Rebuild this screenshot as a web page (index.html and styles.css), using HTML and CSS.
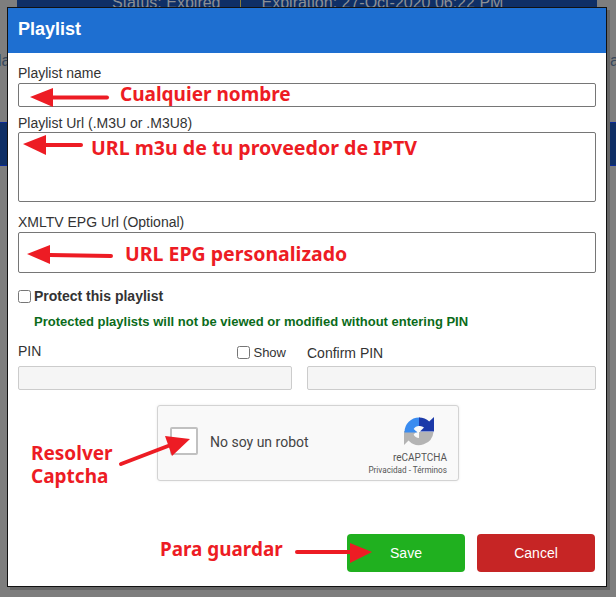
FILE: index.html
```html
<!DOCTYPE html>
<html lang="en">
<head>
    <meta charset="UTF-8">
    <meta name="viewport" content="width=device-width, initial-scale=1.0">
    <title>Playlist</title>
    <link rel="stylesheet" href="styles.css">
</head>
<body>
    <!-- Page behind the dialog -->
    <div class="backdrop">
        <div class="status-bar">
            <span class="status-item">Status: Expired</span>
            <span class="status-item status-item-last">Expiration: 27-Oct-2020 06:22 PM</span>
        </div>
        <div class="side-text">
            <span>la</span>
            <span>va</span>
        </div>
        <div class="nav-bar"></div>
    </div>

    <div class="modal">
        <div class="modal-header">Playlist</div>
        <form class="modal-body">
            <label class="field-label" for="name">Playlist name</label>
            <input class="text-input name-input" type="text" id="name">

            <label class="field-label" for="url">Playlist Url (.M3U or .M3U8)</label>
            <textarea class="text-input url-input" id="url"></textarea>

            <label class="field-label epg-label" for="epg">XMLTV EPG Url (Optional)</label>
            <textarea class="text-input epg-input" id="epg"></textarea>

            <label class="protect-row">
                <input type="checkbox" class="check">
                <span>Protect this playlist</span>
            </label>
            <p class="protect-note">Protected playlists will not be viewed or modified without entering PIN</p>

            <div class="pin-row">
                <div class="pin-col pin-col-first">
                    <div class="pin-head">
                        <label class="field-label" for="pin">PIN</label>
                        <label class="show-pin">
                            <input type="checkbox" class="check">
                            <span>Show</span>
                        </label>
                    </div>
                    <input class="pin-input" type="password" id="pin" disabled>
                </div>
                <div class="pin-col pin-col-second">
                    <div class="pin-head pin-head-second">
                        <label class="field-label" for="confirm">Confirm PIN</label>
                    </div>
                    <input class="pin-input" type="password" id="confirm" disabled>
                </div>
            </div>

            <div class="captcha">
                <div class="captcha-box"></div>
                <div class="captcha-text">No soy un robot</div>
                <div class="captcha-brand">
                    <svg class="captcha-logo" width="30" height="30" viewBox="0 0 30 30">
                        <path d="M15 15 L15 21 A6 6 0 0 1 9.6 17.6 L13 14 L0 14 L0 28 L4.5 23.5 A14.5 14.5 0 0 0 29.5 15 L21 15 Z" fill="#b4b4b4"/>
                        <path d="M0.5 15 A14.5 14.5 0 0 1 15 0.5 L16 0.5 L16 9 L15 9 A6 6 0 0 0 9.7 12 L13.5 15.5 L0.5 15.5 Z" fill="#3a8cf0"/>
                        <path d="M15 0.5 A14.5 14.5 0 0 1 25.2 4.6 L30 0 L30 14.5 L16 14.5 L20 10.6 A6 6 0 0 0 15 9 Z" fill="#1c3aa9"/>
                    </svg>
                    <div class="captcha-name">reCAPTCHA</div>
                    <div class="captcha-links">Privacidad - Términos</div>
                </div>
            </div>

            <div class="modal-actions">
                <button type="button" class="btn btn-save">Save</button>
                <button type="button" class="btn btn-cancel">Cancel</button>
            </div>
        </form>
    </div>

    <!-- Red notes painted over the dialog -->
    <svg class="arrows" width="616" height="597" viewBox="0 0 616 597">
        <g class="arrow">
            <line x1="53" y1="97.5" x2="107" y2="97.5"/>
            <polygon points="30,97 53,88 53,107"/>
            <line x1="46" y1="145" x2="81" y2="145"/>
            <polygon points="23,144 46,135 46,155"/>
            <line x1="50" y1="255" x2="111" y2="256"/>
            <polygon points="27,254 50,245 50,264"/>
            <line x1="168" y1="446" x2="121" y2="464"/>
            <polygon points="190,439 165,436 172,456"/>
            <line x1="350" y1="552" x2="297" y2="552"/>
            <polygon points="372,552 350,543 350,563"/>
        </g>
    </svg>
    <div class="note note-name">Cualquier nombre</div>
    <div class="note note-url">URL m3u de tu proveedor de IPTV</div>
    <div class="note note-epg">URL EPG personalizado</div>
    <div class="note note-captcha">Resolver<br>Captcha</div>
    <div class="note note-save">Para guardar</div>
</body>
</html>
```

FILE: styles.css
```css
html, body {
    margin: 0;
    padding: 0;
}
body {
    width: 616px;
    height: 597px;
    overflow: hidden;
    background-color: #7e7e7e;
    font-family: "Liberation Sans", Arial, sans-serif;
    color: #333;
}

/* Page behind the dialog */
.status-bar {
    display: flex;
    align-items: flex-start;
    height: 7px;
    margin: 0 19px 0 17px;
    padding-left: 95px;
    overflow: hidden;
    background-color: #0f2f66;
    color: #8b8f94;
    font-size: 16px;
    line-height: 18px;
}
.status-item {
    flex: none;
    margin-top: -6px;
    padding-right: 19px;
    border-right: 1px solid #8a7d3a;
}
.status-item-last {
    padding-left: 21px;
    border-right: 0;
}
.side-text {
    display: flex;
    justify-content: space-between;
    height: 115px;
    padding-top: 45px;
    box-sizing: border-box;
    color: #38485c;
    font-size: 16px;
    line-height: 18px;
}
.side-text span:first-child {
    margin-left: -2px;
}
.side-text span:last-child {
    margin-right: -3px;
}
.nav-bar {
    height: 44px;
    background-color: #0f2f66;
    border-top: 1px solid #0a2a9a;
    border-bottom: 1px solid #0a2a9a;
    box-sizing: border-box;
}

/* Dialog */
.modal {
    position: absolute;
    top: 7px;
    left: 7px;
    width: 600px;
    height: 580px;
    box-sizing: border-box;
    border: 1px solid #111;
    background-color: #fff;
    box-shadow: 3px 3px 0 #666;
}
.modal-header {
    height: 45px;
    padding-left: 10px;
    background-color: #1e6fd1;
    color: #fff;
    font-size: 18px;
    font-weight: bold;
    line-height: 42px;
}
.modal-body {
    padding: 12px 10px 0;
}
.field-label {
    display: block;
    font-size: 14px;
    line-height: 16px;
    color: #333;
}
.text-input {
    display: block;
    width: 578px;
    margin: 0 0 8px;
    padding: 0;
    box-sizing: border-box;
    border: 1px solid #767676;
    border-radius: 2px;
    background-color: #fff;
    resize: none;
}
.field-label + .text-input {
    margin-top: 2px;
}
.name-input {
    height: 24px;
}
.field-label + .url-input {
    margin-top: 1px;
}
.url-input {
    height: 70px;
}
.epg-label {
    margin-top: 12px;
}
.epg-input {
    height: 41px;
}
.check {
    width: 13px;
    height: 13px;
    margin: 0;
    flex: none;
}
.protect-row {
    display: flex;
    align-items: center;
    gap: 3px;
    margin-top: 15px;
    font-size: 14px;
    font-weight: bold;
    line-height: 16px;
}
.protect-note {
    margin: 10px 0 0 16px;
    color: #0b6b1a;
    font-size: 13px;
    font-weight: bold;
    line-height: 16px;
}
.pin-row {
    display: flex;
    gap: 15px;
    margin-top: 11px;
}
.pin-col-first {
    width: 274px;
}
.pin-col-second {
    width: 289px;
}
.pin-head {
    display: flex;
    justify-content: space-between;
    align-items: center;
    height: 20px;
    margin-bottom: 5px;
}
.pin-head-second {
    padding-top: 4px;
    box-sizing: border-box;
}
.show-pin {
    display: flex;
    align-items: center;
    gap: 3px;
    margin: 2px 6px 0 0;
    font-size: 13px;
}
.pin-input {
    display: block;
    width: 100%;
    height: 24px;
    padding: 0;
    box-sizing: border-box;
    border: 1px solid #ccc;
    border-radius: 2px;
    background-color: #f5f5f5;
}

/* Captcha */
.captcha {
    display: flex;
    align-items: center;
    width: 302px;
    height: 76px;
    margin: 15px 0 0 139px;
    padding: 0 11px 4px 12px;
    box-sizing: border-box;
    border: 1px solid #d3d3d3;
    border-radius: 3px;
    background-color: #f9f9f9;
    box-shadow: 0 0 3px rgba(0, 0, 0, 0.08);
    font-family: Roboto, "Liberation Sans", sans-serif;
}
.captcha-box {
    width: 28px;
    height: 28px;
    box-sizing: border-box;
    border: 2px solid #c1c1c1;
    border-radius: 2px;
    background-color: #fff;
}
.captcha-text {
    margin: 2px 0 0 12px;
    font-size: 14px;
    color: #444;
}
.captcha-brand {
    display: flex;
    flex-direction: column;
    align-items: flex-end;
    align-self: flex-start;
    margin-left: auto;
    padding-top: 11px;
    color: #555;
}
.captcha-logo {
    display: block;
    margin-right: 13px;
}
.captcha-name {
    margin: 5px 0 0 0;
    font-size: 10px;
    line-height: 12px;
}
.captcha-links {
    margin-top: 1px;
    font-size: 8.2px;
    line-height: 10px;
    white-space: nowrap;
}

/* Buttons */
.modal-actions {
    display: flex;
    justify-content: flex-end;
    gap: 12px;
    margin: 53px 1px 0 0;
}
.btn {
    width: 118px;
    height: 38px;
    border: 0;
    border-radius: 4px;
    color: #fff;
    font-family: "Liberation Sans", Arial, sans-serif;
    font-size: 14px;
}
.btn-save {
    background-color: #20b01f;
}
.btn-cancel {
    background-color: #c62525;
}

/* Annotations */
.arrows {
    position: absolute;
    top: 0;
    left: 0;
}
.arrow line {
    stroke: #ed1c24;
    stroke-width: 4;
    stroke-linecap: round;
}
.arrow polygon {
    fill: #ed1c24;
}
.note {
    position: absolute;
    color: #ed1c24;
    font-family: "Noto Sans", sans-serif;
    font-size: 19px;
    font-weight: bold;
    line-height: 24px;
    white-space: nowrap;
}
.note-name {
    top: 82px;
    left: 120px;
}
.note-url {
    top: 136px;
    left: 91px;
    font-size: 19.6px;
}
.note-epg {
    top: 242px;
    left: 125px;
    font-size: 19.5px;
}
.note-captcha {
    top: 442px;
    left: 31px;
    line-height: 23px;
}
.note-save {
    top: 537px;
    left: 160px;
    font-size: 18.9px;
}
```
